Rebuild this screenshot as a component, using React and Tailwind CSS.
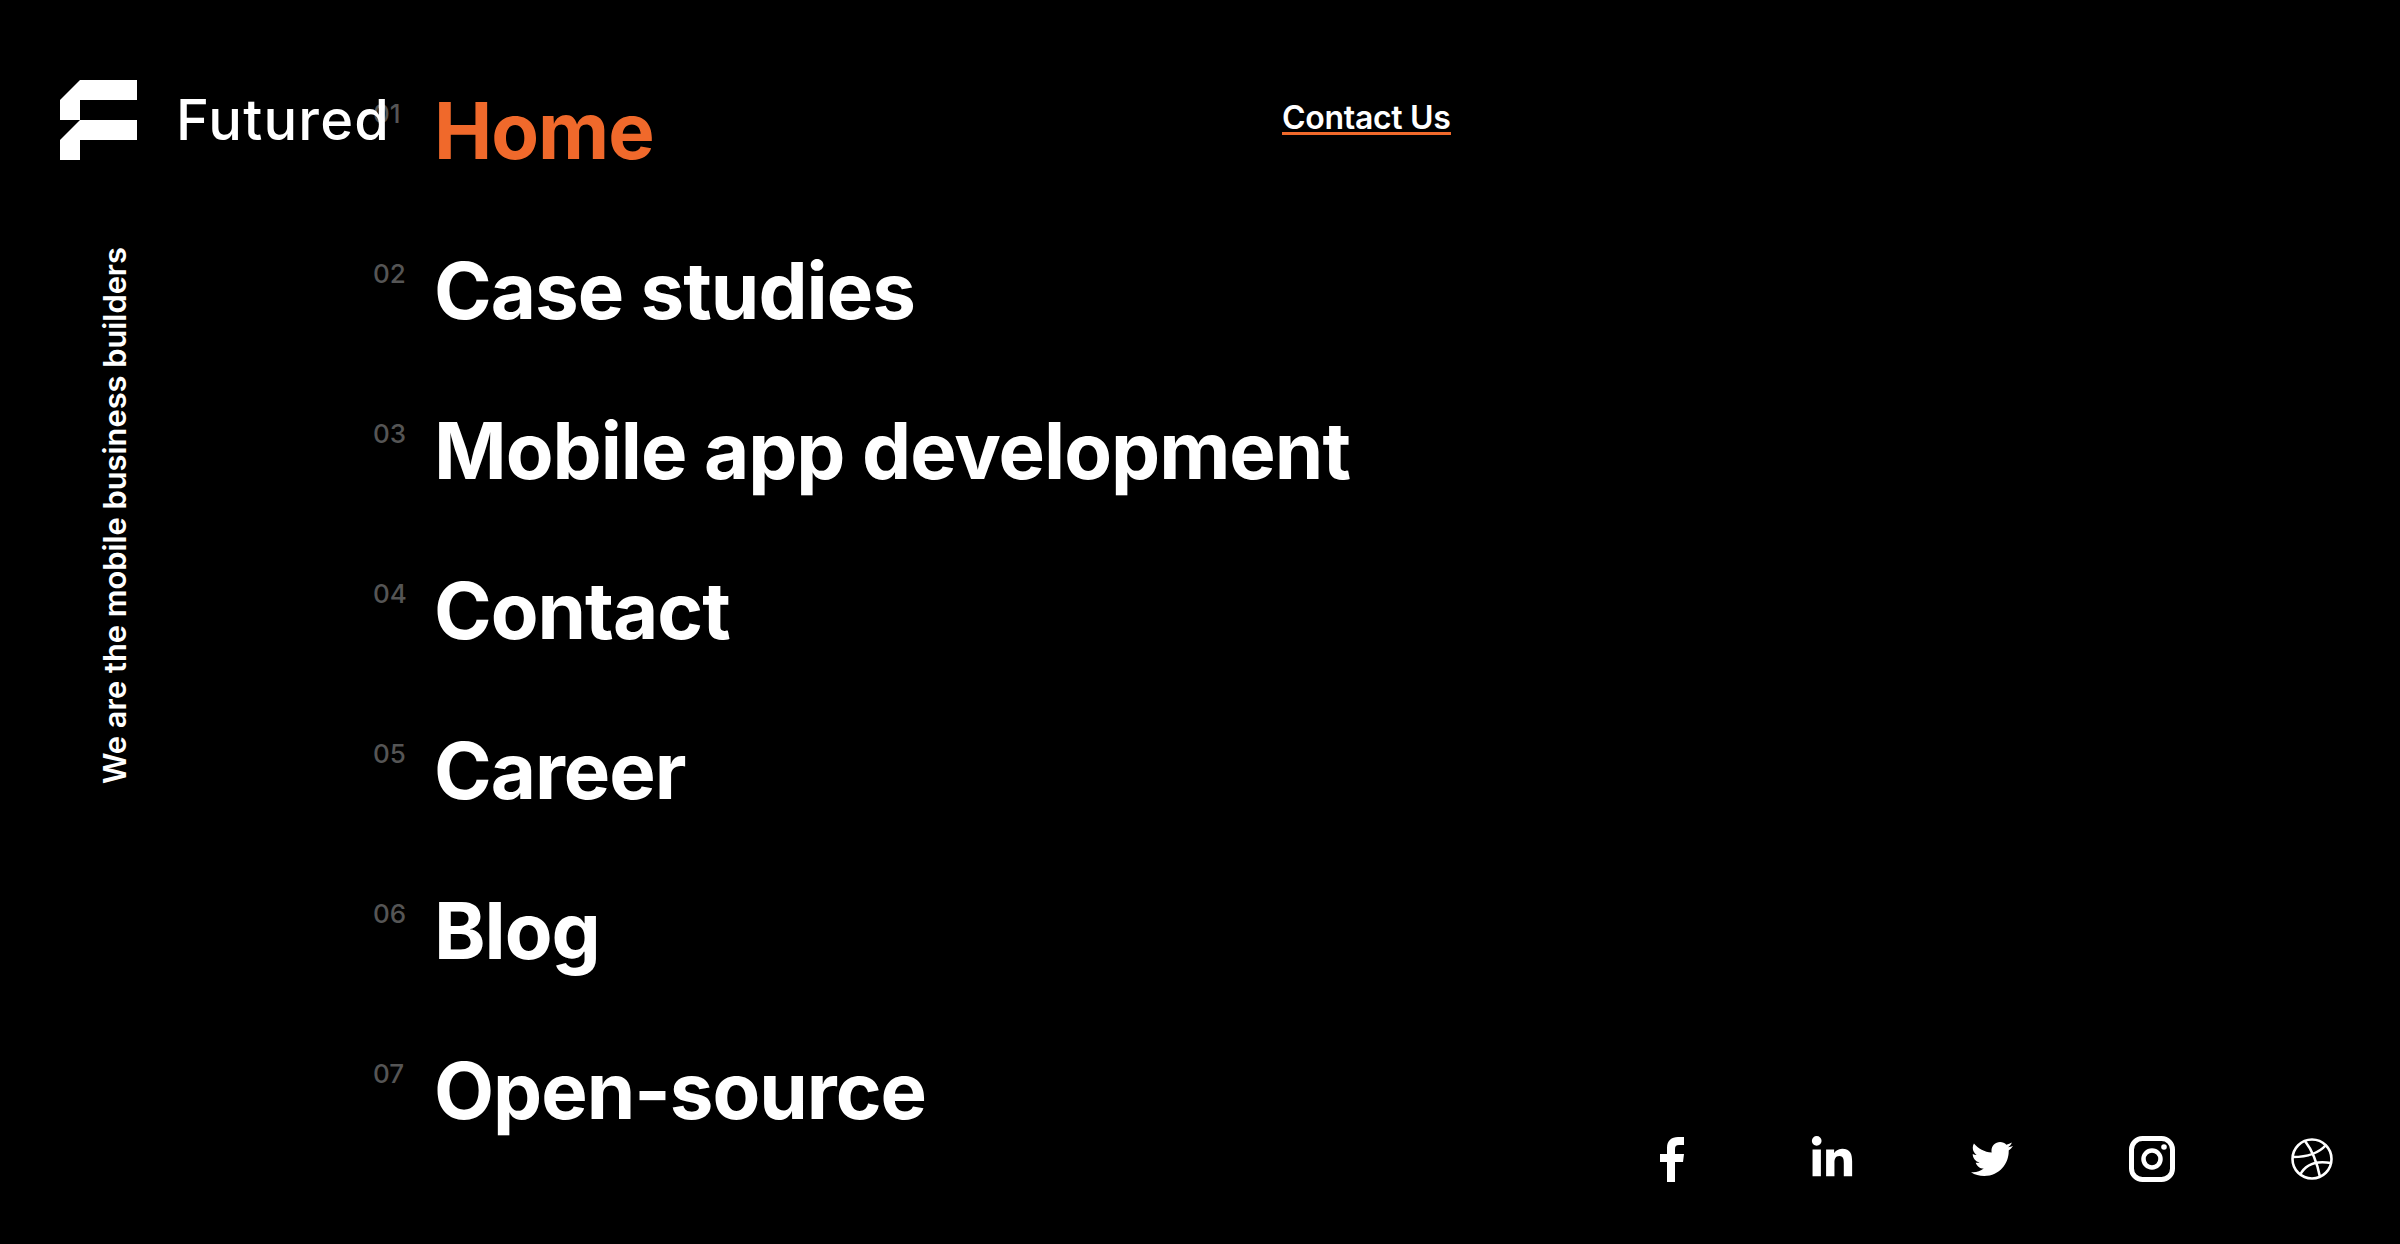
import React from "react";
import { FaLinkedinIn, FaTwitter } from "react-icons/fa";

const links = [
  { num: "01", label: "Home", active: true },
  { num: "02", label: "Case studies" },
  { num: "03", label: "Mobile app development" },
  { num: "04", label: "Contact" },
  { num: "05", label: "Career" },
  { num: "06", label: "Blog" },
  { num: "07", label: "Open-source" },
];

function Logo() {
  return (
    <svg width="78" height="80" viewBox="0 0 78 80" fill="#fff" className="shrink-0">
      <path d="M20 0H77V20H20V40H0V20Z" />
      <path d="M20 40H77V60H20V80H0V60Z" />
    </svg>
  );
}

function Facebook() {
  return (
    <svg width="24" height="45" viewBox="0 0 24 45" fill="#fff">
      <path d="M7 45V25H0V17H7V11C7 3.5 11.5 0 18 0H24V8H19C16 8 15 9.5 15 12V17H24L23 25H15V45Z" />
    </svg>
  );
}

function Instagram() {
  return (
    <svg width="46" height="46" viewBox="0 0 46 46" fill="none" stroke="#fff">
      <rect x="2.5" y="2.5" width="41" height="41" rx="11" strokeWidth="5" />
      <circle cx="23" cy="23" r="8.5" strokeWidth="4.5" />
      <circle cx="35" cy="11" r="2.8" fill="#fff" stroke="none" />
    </svg>
  );
}

function Dribbble() {
  return (
    <svg width="42" height="42" viewBox="0 0 42 42" fill="none" stroke="#fff" strokeWidth="2.6">
      <circle cx="21" cy="21" r="19.5" />
      <path d="M14 3c7 9 12 21 15 36" />
      <path d="M2 19c13 0 25-3 33-12" />
      <path d="M9 37c5-10 14-15 31-12" />
    </svg>
  );
}

export default function App() {
  return (
    <div className="flex h-[1244px] w-full overflow-hidden bg-black text-white font-['Inter',sans-serif]">
      <div className="flex w-[373px] shrink-0 flex-col pl-[60px] pt-[80px]">
        <div className="flex h-[80px] items-center gap-[38px]">
          <Logo />
          <span className="relative z-10 text-[56px] font-medium leading-none tracking-[1.2px] whitespace-nowrap">Futured</span>
        </div>
        <div className="mt-[87px] ml-[39px] self-start text-[30.8px] font-semibold leading-[32px] whitespace-nowrap [writing-mode:vertical-rl] rotate-180">
          We are the mobile business builders
        </div>
      </div>

      <nav className="flex w-[909px] shrink-0 flex-col gap-[60px] pt-[81px]">
        {links.map((l) => (
          <a key={l.num} className="flex h-[100px] items-start">
            <span className="mt-[17px] w-[61px] shrink-0 text-[26px] font-medium leading-[32px] text-[#555]">{l.num}</span>
            <span className={"text-[78px] font-bold leading-[100px] tracking-[-1px] whitespace-nowrap " + (l.active ? "text-[#f0692b]" : "text-white")}>
              {l.label}
            </span>
          </a>
        ))}
      </nav>

      <div className="flex flex-1 flex-col justify-between">
        <div className="pt-[104px]">
          <a className="block w-fit border-b-[3px] border-[#f0692b] text-[32px] font-semibold leading-[28px] tracking-[-0.3px]">Contact Us</a>
        </div>
        <div className="mb-[62px] ml-[310px] flex h-[46px] items-center">
          <div className="flex w-[160px] justify-center"><Facebook /></div>
          <div className="flex w-[160px] justify-center"><FaLinkedinIn size={46} /></div>
          <div className="flex w-[160px] justify-center"><FaTwitter size={42} /></div>
          <div className="flex w-[160px] justify-center"><Instagram /></div>
          <div className="flex w-[160px] justify-center"><Dribbble /></div>
        </div>
      </div>
    </div>
  );
}
